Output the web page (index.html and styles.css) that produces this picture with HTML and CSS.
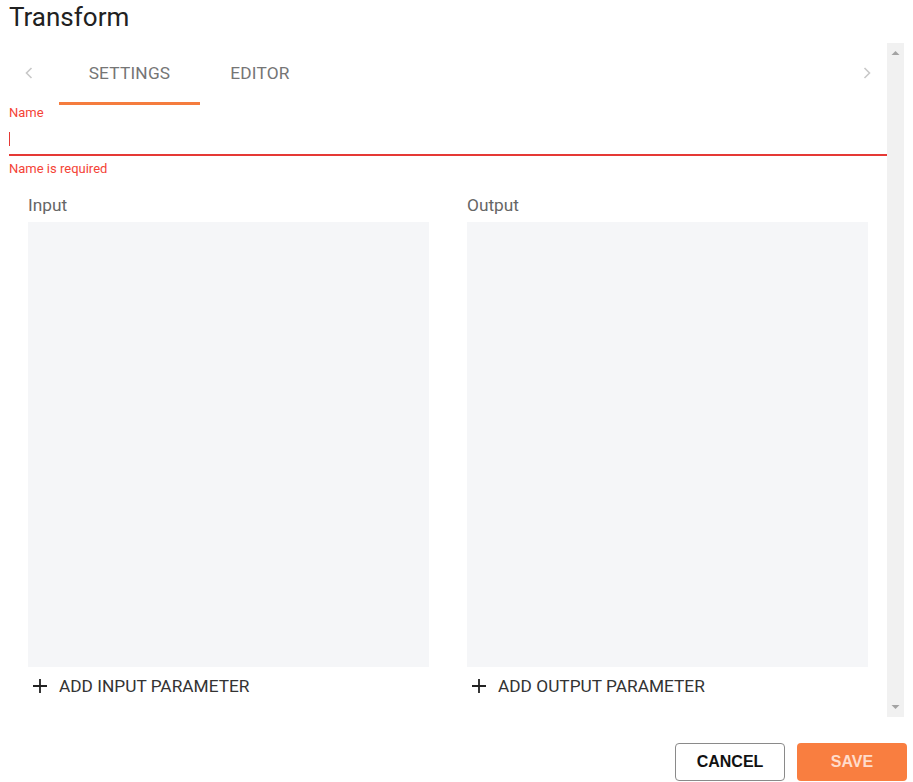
FILE: index.html
```html
<!DOCTYPE html>
<html>
<head>
<meta charset="utf-8">
<link rel="stylesheet" href="styles.css">
</head>
<body>
<div class="dialog">
  <h1 class="title">Transform</h1>
  <div class="main">
    <div class="content">
      <div class="tabbar">
        <div class="tab-arrow">
          <svg width="10" height="14" viewBox="0 0 10 14"><path d="M7.5 2 L2.5 7 L7.5 12" fill="none" stroke="#c8c8c8" stroke-width="1.6"/></svg>
        </div>
        <div class="tabs">
          <div class="tab active">SETTINGS</div>
          <div class="tab editor">EDITOR</div>
        </div>
        <div class="tab-arrow right">
          <svg width="10" height="14" viewBox="0 0 10 14"><path d="M2.5 2 L7.5 7 L2.5 12" fill="none" stroke="#c8c8c8" stroke-width="1.6"/></svg>
        </div>
      </div>
      <div class="field">
        <label class="field-label">Name</label>
        <div class="field-input"><span class="caret"></span></div>
        <div class="field-error">Name is required</div>
      </div>
      <div class="params">
        <div class="param-col">
          <div class="param-title">Input</div>
          <div class="param-box"></div>
          <div class="param-add">
            <svg width="16" height="16" viewBox="0 0 16 16"><path d="M8 1 V15 M1 8 H15" stroke="#222" stroke-width="1.8" fill="none"/></svg>
            <span>ADD INPUT PARAMETER</span>
          </div>
        </div>
        <div class="param-col">
          <div class="param-title">Output</div>
          <div class="param-box"></div>
          <div class="param-add">
            <svg width="16" height="16" viewBox="0 0 16 16"><path d="M8 1 V15 M1 8 H15" stroke="#222" stroke-width="1.8" fill="none"/></svg>
            <span>ADD OUTPUT PARAMETER</span>
          </div>
        </div>
      </div>
    </div>
    <div class="scrollbar">
      <svg class="sb-arrow" width="17" height="17" viewBox="0 0 17 17"><path d="M4.5 12 L8.5 8 L12.5 12 Z" fill="#a3a3a3"/></svg>
      <svg class="sb-arrow" width="17" height="17" viewBox="0 0 17 17"><path d="M4.5 5 L8.5 9 L12.5 5 Z" fill="#a3a3a3"/></svg>
    </div>
  </div>
  <div class="footer">
    <button class="btn btn-cancel">CANCEL</button>
    <button class="btn btn-save">SAVE</button>
  </div>
</div>
</body>
</html>
```

FILE: styles.css
```css
html, body {
  margin: 0;
  padding: 0;
  background: #fff;
  font-family: Roboto, "Noto Sans", sans-serif;
}
.dialog {
  width: 913px;
  height: 782px;
  display: flex;
  flex-direction: column;
}
.title {
  margin: 0;
  padding: 0 0 0 9px;
  height: 43px;
  font-size: 26px;
  font-weight: 400;
  line-height: 34px;
  color: #212121;
}
.main {
  display: flex;
  height: 674px;
  width: 904px;
}
.content {
  width: 878px;
  padding-left: 9px;
}
.scrollbar {
  width: 17px;
  background: #f1f1f1;
  display: flex;
  flex-direction: column;
  justify-content: space-between;
}
.sb-arrow {
  display: block;
}
.tabbar {
  display: flex;
  height: 62px;
  align-items: stretch;
}
.tab-arrow {
  width: 40px;
  display: flex;
  align-items: center;
  justify-content: center;
  padding-bottom: 2px;
}
.tabs {
  flex: 1;
  display: flex;
  margin-left: 10px;
}
.tab {
  width: 141px;
  display: flex;
  align-items: center;
  justify-content: center;
  font-size: 17.3px;
  letter-spacing: 0.2px;
  color: #757575;
  box-sizing: border-box;
  padding-bottom: 3px;
}
.tab.editor {
  width: 120px;
}
.tab.active {
  border-bottom: 3px solid #f57c3e;
  padding-bottom: 0;
}
.field {
  padding-top: 0;
}
.field-label {
  display: block;
  font-size: 13px;
  line-height: 15px;
  color: #f44336;
}
.field-input {
  height: 34px;
  border-bottom: 2px solid #e53935;
  box-sizing: border-box;
  padding-top: 8px;
  margin-top: 2px;
}
.caret {
  display: block;
  width: 1px;
  height: 14px;
  background: #e53935;
  margin-top: 2px;
}
.field-error {
  font-size: 13px;
  line-height: 16px;
  margin-top: 5px;
  color: #f44336;
}
.params {
  display: grid;
  grid-template-columns: 401px 401px;
  column-gap: 38px;
  padding: 18px 19px 0;
}
.param-title {
  font-size: 17.3px;
  line-height: 21px;
  color: #666;
  margin-bottom: 6px;
}
.param-box {
  height: 445px;
  background: #f5f6f8;
}
.param-add {
  display: flex;
  align-items: center;
  height: 38px;
  font-size: 17.3px;
  color: #333;
}
.param-add svg {
  margin-left: 4px;
  margin-right: 11px;
}
.footer {
  display: flex;
  justify-content: flex-end;
  gap: 12px;
  padding: 26px 6px 0 0;
}
.btn {
  width: 110px;
  height: 38px;
  border-radius: 4px;
  font-family: "Liberation Sans", Arial, sans-serif;
  font-weight: 700;
  font-size: 16px;
  box-sizing: border-box;
  padding: 0;
}
.btn-cancel {
  background: #fff;
  border: 1px solid #8a8a8a;
  color: #111;
}
.btn-save {
  background: #f97e40;
  border: none;
  color: #ffdccb;
}
```
